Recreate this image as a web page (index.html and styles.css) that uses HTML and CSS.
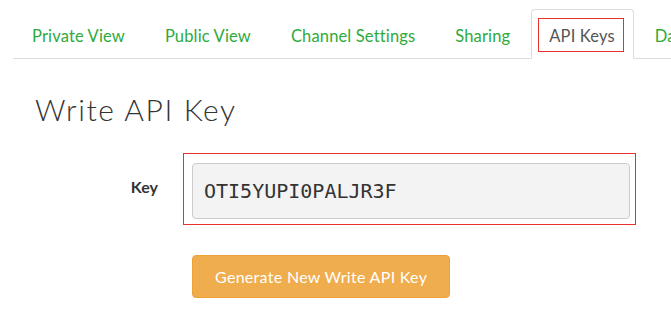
FILE: index.html
```html
<!DOCTYPE html>
<html lang="en">
<head>
    <meta charset="UTF-8">
    <meta name="viewport" content="width=device-width, initial-scale=1.0">
    <title>API Keys</title>
    <link rel="stylesheet" href="styles.css">
</head>
<body>

    <div class="page">
        <ul class="tabs">
            <li><a href="#private">Private View</a></li>
            <li><a href="#public">Public View</a></li>
            <li><a href="#settings">Channel Settings</a></li>
            <li><a href="#sharing">Sharing</a></li>
            <li class="active"><a href="#keys"><span class="mark">API Keys</span></a></li>
            <li><a href="#data">Data Import / Export</a></li>
        </ul>

        <main>
            <h2 class="title">Write API Key</h2>

            <form class="key-form">
                <div class="form-row">
                    <label for="writeKey">Key</label>
                    <div class="mark-box">
                        <input type="text" id="writeKey" value="OTI5YUPI0PALJR3F" readonly>
                    </div>
                </div>
                <div class="form-row">
                    <span class="spacer"></span>
                    <button type="button" class="generate">Generate New Write API Key</button>
                </div>
            </form>
        </main>
    </div>

</body>
</html>
```

FILE: styles.css
```css
body {
    margin: 0;
    padding: 0;
    background-color: #fff;
    font-family: 'Lato', sans-serif;
    color: #333;
    overflow: hidden;
}

.page {
    padding-left: 13px;
    width: 900px;
}

.tabs {
    list-style: none;
    margin: 0;
    padding: 9px 0 0 0;
    display: flex;
    border-bottom: 1px solid #ddd;
}

.tabs li {
    margin-right: 2px;
    margin-bottom: -1px;
}

.tabs a {
    display: block;
    padding: 16px 18px 12px;
    line-height: 20px;
    font-size: 16.5px;
    letter-spacing: 0.15px;
    color: #2eaa3c;
    text-decoration: none;
    border: 1px solid transparent;
    border-radius: 4px 4px 0 0;
    white-space: nowrap;
}

.tabs li.active a {
    color: #555;
    background-color: #fff;
    border-color: #ddd #ddd transparent;
    padding: 8px 9px 6px 6px;
}

.mark {
    display: block;
    border: 1px solid #e8302f;
    padding: 7px 8px 5px 10px;
}

.title {
    margin: 34px 0 0 22px;
    font-size: 30px;
    font-weight: 300;
    line-height: 1.1;
    letter-spacing: 1.6px;
    color: #333;
}

.key-form {
    margin-top: 27px;
}

.form-row {
    display: flex;
    align-items: center;
    gap: 25px;
}

.form-row label,
.spacer {
    width: 145px;
    flex-shrink: 0;
    text-align: right;
    font-weight: 700;
    font-size: 16px;
    padding-bottom: 6px;
}

.mark-box {
    border: 1px solid #e8302f;
    padding: 9px 5px 5px 8px;
}

.mark-box input {
    display: block;
    width: 438px;
    height: 56px;
    box-sizing: border-box;
    margin: 0;
    padding: 0 11px;
    border: 1px solid #ccc;
    border-radius: 4px;
    background-color: #f3f3f3;
    font-family: 'DejaVu Sans Mono', monospace;
    font-size: 20px;
    color: #333;
}

.generate {
    margin: 30px 0 0 9px;
    padding: 10px 22px;
    line-height: 21px;
    font-family: 'Lato', sans-serif;
    font-size: 16px;
    letter-spacing: 0.3px;
    color: #fff;
    background-color: #f0ad4e;
    border: 1px solid #eea236;
    border-radius: 4px;
    cursor: pointer;
}
```
